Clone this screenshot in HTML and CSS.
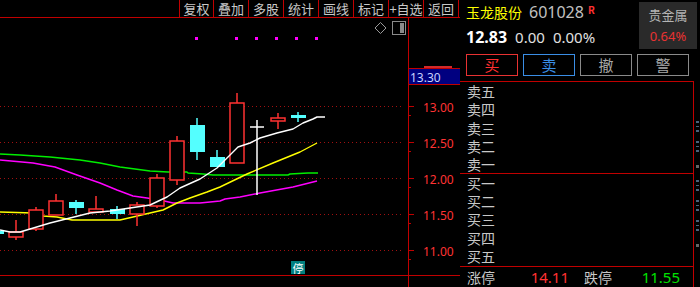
FILE: index.html
```html
<!DOCTYPE html>
<html lang="zh">
<head>
<meta charset="utf-8">
<title>玉龙股份 601028</title>
<link rel="stylesheet" href="styles.css">
</head>
<body>
<div class="app">
  <div class="left">
    <div class="toolbar">
      <span class="tb">复权</span><span class="tb">叠加</span><span class="tb">多股</span><span class="tb">统计</span><span class="tb">画线</span><span class="tb">标记</span><span class="tb">+自选</span><span class="tb">返回</span>
    </div>
    <svg class="chart" viewBox="0 18 460 269" width="460" height="269" xmlns="http://www.w3.org/2000/svg">
      <defs>
        <clipPath id="abovebox"><rect x="408" y="18" width="52" height="50"/></clipPath>
      </defs>
      <g class="grid">
        <line x1="0" y1="106.5" x2="404" y2="106.5"/>
        <line x1="0" y1="142.5" x2="404" y2="142.5"/>
        <line x1="0" y1="178.5" x2="404" y2="178.5"/>
        <line x1="0" y1="214.5" x2="404" y2="214.5"/>
        <line x1="0" y1="250.5" x2="404" y2="250.5"/>
      </g>
      <g class="mk">
        <rect x="195" y="37" width="3" height="3"/>
        <rect x="235" y="37" width="3" height="3"/>
        <rect x="255" y="37" width="3" height="3"/>
        <rect x="275" y="37" width="3" height="3"/>
        <rect x="295" y="37" width="3" height="3"/>
        <rect x="315" y="37" width="3" height="3"/>
      </g>
      <path class="diamond" d="M380.5 22.5 L386 28 L380.5 33.5 L375 28 Z"/>
      <rect class="boxicon" x="392.5" y="21.5" width="13" height="13"/>
      <rect class="boxbar" x="400" y="23" width="4" height="10"/>
      <polyline class="ma ma-g" points="0,154 20,155 50,157 80,160 100,163 120,167 150,171 168,172 187,172 188,173 203,174 213,175 288,175 290,174 308,173 318,173"/>
      <polyline class="ma ma-m" points="0,160 33,163 55,167 77,175 100,183 117,190 133,196 147,198 160,200 173,203 200,203 220,201 225,199 240,197 260,193 293,187 317,181"/>
      <polyline class="ma ma-y" points="0,212 33,213 43,216 57,217 72,220 120,220 133,217 150,213 163,210 177,203 190,198 207,192 220,187 247,174 273,163 300,152 317,143"/>
      <g class="up">
        <line x1="16" y1="220" x2="16" y2="240"/><rect x="9" y="232" width="14" height="5"/>
        <line x1="36" y1="207" x2="36" y2="231"/><rect x="29" y="210" width="14" height="19"/>
        <line x1="56" y1="194" x2="56" y2="201"/><rect x="49" y="201" width="14" height="14"/>
        <line x1="96" y1="196" x2="96" y2="213"/><rect x="89" y="209" width="14" height="3"/>
        <line x1="137" y1="202" x2="137" y2="226"/><rect x="130" y="205" width="14" height="9"/>
        <line x1="157" y1="174" x2="157" y2="208"/><rect x="150" y="178" width="14" height="28"/>
        <line x1="177" y1="136" x2="177" y2="185"/><rect x="170" y="141" width="14" height="39"/>
        <line x1="237" y1="93" x2="237" y2="103"/><rect x="230" y="103" width="14" height="60"/>
        <line x1="278" y1="113" x2="278" y2="129"/><rect x="271" y="118" width="14" height="3"/>
      </g>
      <g class="down">
        <rect x="0" y="231" width="4" height="3"/>
        <line x1="76" y1="200" x2="76" y2="214"/><rect x="69" y="202" width="15" height="6"/>
        <line x1="117" y1="206" x2="117" y2="219"/><rect x="110" y="209" width="15" height="5"/>
        <line x1="197" y1="118" x2="197" y2="160"/><rect x="190" y="125" width="15" height="27"/>
        <line x1="217" y1="150" x2="217" y2="167"/><rect x="210" y="157" width="15" height="10"/>
        <line x1="298" y1="112" x2="298" y2="122"/><rect x="291" y="115" width="15" height="3"/>
      </g>
      <g class="cross">
        <line x1="257" y1="120" x2="257" y2="195"/>
        <line x1="250" y1="127" x2="264" y2="127"/>
      </g>
      <polyline class="ma ma-w" points="0,230 10,232 20,232 30,229 50,223 70,218 90,213 110,211 130,208 150,205 167,197 180,188 200,179 217,168 228,157 238,147 250,143 260,138 277,133 293,129 303,123 313,119 317,117 325,117"/>
      <rect class="badge" x="291" y="261" width="14" height="13"/>
      <text class="badge-t" x="298" y="268">停</text>
      <line class="axis" x1="408.5" y1="18" x2="408.5" y2="287"/>
      <line class="axis" x1="0" y1="275.5" x2="460" y2="275.5"/>
      <g class="ticks">
        <line x1="408" y1="79.5" x2="411" y2="79.5"/>
        <line x1="408" y1="106.5" x2="414" y2="106.5"/>
        <line x1="408" y1="115.5" x2="411" y2="115.5"/>
        <line x1="408" y1="142.5" x2="414" y2="142.5"/>
        <line x1="408" y1="151.5" x2="411" y2="151.5"/>
        <line x1="408" y1="178.5" x2="414" y2="178.5"/>
        <line x1="408" y1="187.5" x2="411" y2="187.5"/>
        <line x1="408" y1="214.5" x2="414" y2="214.5"/>
        <line x1="408" y1="223.5" x2="411" y2="223.5"/>
        <line x1="408" y1="250.5" x2="414" y2="250.5"/>
        <line x1="408" y1="259.5" x2="411" y2="259.5"/>
      </g>
      <g class="lbl">
        <text x="423" y="107">13.00</text>
        <text x="423" y="143">12.50</text>
        <text x="423" y="179">12.00</text>
        <text x="423" y="215">11.50</text>
        <text x="423" y="251">11.00</text>
      </g>
      <rect class="peek" x="424" y="66" width="28" height="2" clip-path="url(#abovebox)"/>
      <rect class="cur" x="408.5" y="68.5" width="52" height="16"/>
      <text class="cur-t" x="410" y="77">13.30</text>
    </svg>
  </div>
  <div class="right">
    <div class="head">
      <div class="quote">
        <div class="name-row"><span class="name">玉龙股份</span><span class="code">601028</span><span class="rflag">R</span></div>
        <div class="price-row"><span class="price">12.83</span><span class="chg">0.00</span><span class="chg">0.00%</span></div>
      </div>
      <div class="sector"><span class="sec-name">贵金属</span><span class="sec-pct">0.64%</span></div>
    </div>
    <div class="btns">
      <span class="btn btn-buy">买</span>
      <span class="btn btn-sell">卖</span>
      <span class="btn btn-gray">撤</span>
      <span class="btn btn-gray">警</span>
    </div>
    <div class="book-wrap">
      <div class="book">
        <div class="sec">
          <div class="row">卖五</div><div class="row">卖四</div><div class="row">卖三</div><div class="row">卖二</div><div class="row">卖一</div>
        </div>
        <div class="sec sec-buy">
          <div class="row">买一</div><div class="row">买二</div><div class="row">买三</div><div class="row">买四</div><div class="row">买五</div>
        </div>
        <div class="limits">
          <span class="lim-l">涨停</span><span class="lim-v up-v">14.11</span><span class="lim-l lim-l2">跌停</span><span class="lim-v dn-v">11.55</span>
        </div>
      </div>
      <div class="clip" aria-hidden="true">
        <span class="cl c1"></span><span class="cl c2"></span><span class="cl c3"></span><span class="cl c4"></span><span class="cl c5"></span><span class="cl c6"></span><span class="cl c7"></span>
      </div>
    </div>
  </div>
</div>
</body>
</html>
```

FILE: styles.css
```css
* { box-sizing: border-box; }
body {
  margin: 0;
  background: #000;
  font-family: "Noto Sans CJK SC", "Noto Sans", sans-serif;
  color: #c8c8c8;
}
.app {
  display: flex;
  width: 700px;
  height: 287px;
  overflow: hidden;
  background: #000;
}
.left {
  width: 460px;
  display: flex;
  flex-direction: column;
}
.toolbar {
  height: 18px;
  border-bottom: 1px solid #c00000;
  display: flex;
  padding-left: 179px;
}
.tb {
  width: 35px;
  border-left: 1px solid #c00000;
  font-size: 13px;
  line-height: 17px;
  text-align: center;
  color: #c8c8c8;
  white-space: nowrap;
}
.tb:first-child { width: 34px; }
.tb:last-child { border-right: 1px solid #c00000; width: 36px; }
.chart { display: block; }
.grid line { stroke: #a01010; stroke-width: 1; stroke-dasharray: 1 3; }
.mk rect { fill: #ff00ff; }
.diamond { fill: none; stroke: #9a9a9a; stroke-width: 1; }
.boxicon { fill: none; stroke: #8a8a8a; stroke-width: 1; }
.boxbar { fill: #8a8a8a; }
.ma { fill: none; stroke-width: 1.4; stroke-linejoin: round; }
.ma-w { stroke: #ffffff; }
.ma-y { stroke: #ffff00; }
.ma-g { stroke: #00ee00; }
.ma-m { stroke: #ff00ff; }
.up line { stroke: #ff3232; stroke-width: 1.5; }
.up rect { fill: #000; stroke: #ff3232; stroke-width: 1.5; }
.down line { stroke: #54ffff; stroke-width: 1.5; }
.down rect { fill: #54ffff; }
.cross line { stroke: #ffffff; stroke-width: 1.5; }
.badge { fill: #008080; }
.badge-t { fill: #ffffff; font-size: 11px; text-anchor: middle; dominant-baseline: central; font-family: "Noto Sans CJK SC", sans-serif; }
.axis { stroke: #c00000; stroke-width: 1; }
.ticks line { stroke: #c00000; stroke-width: 1; }
.lbl text { fill: #ff3333; font-size: 12px; dominant-baseline: central; font-family: "Noto Sans", "Noto Sans CJK SC", sans-serif; }
.peek { fill: #d02a2a; }
.cur { fill: #000080; stroke: #c00000; stroke-width: 1; }
.cur-t { fill: #c8d0ff; font-size: 12px; dominant-baseline: central; font-family: "Noto Sans", sans-serif; }

.right {
  width: 240px;
  display: flex;
  flex-direction: column;
}
.head {
  height: 55px;
  display: flex;
  justify-content: space-between;
  padding: 2px 3px 0 5px;
}
.quote { display: flex; flex-direction: column; }
.name-row {
  display: flex;
  align-items: baseline;
  height: 20px;
  line-height: 20px;
  white-space: nowrap;
}
.name { color: #ffff00; font-size: 14px; margin-left: 1px; }
.code { color: #c0c0c0; font-size: 16px; margin-left: 7px; font-family: "Noto Sans", sans-serif; }
.rflag { color: #ff3030; font-size: 10px; font-weight: bold; margin-left: 4px; position: relative; top: -4px; }
.price-row {
  display: flex;
  align-items: baseline;
  margin-top: 3px;
  height: 24px;
  line-height: 24px;
  white-space: nowrap;
  font-family: "Noto Sans", sans-serif;
}
.price { color: #ffffff; font-size: 16px; font-weight: bold; margin-left: 1px; }
.chg { color: #e0e0e0; font-size: 15px; margin-left: 8px; }
.sector {
  width: 58px;
  height: 47px;
  background: #2a2a2a;
  display: flex;
  flex-direction: column;
  align-items: center;
  justify-content: space-around;
  padding: 2px 0;
}
.sec-name { color: #b4b4b4; font-size: 13px; line-height: 16px; }
.sec-pct { color: #e83232; font-size: 13px; line-height: 16px; font-family: "Noto Sans", sans-serif; }

.btns {
  display: flex;
  gap: 5px;
  padding-left: 6px;
  height: 22px;
}
.btn {
  width: 52px;
  height: 22px;
  border: 1px solid #888;
  font-size: 15px;
  line-height: 20px;
  text-align: center;
  color: #a0a0a0;
}
.btn-buy { border-color: #e83232; color: #ff3030; }
.btn-sell { border-color: #3a8ee6; color: #3a8ee6; }
.btn-gray { border-color: #8a8a8a; color: #a8a8a8; }

.book-wrap {
  margin-top: 5px;
  display: flex;
  flex: 1;
}
.book {
  width: 234px;
  border-top: 1px solid #c00000;
  border-right: 1px solid #c00000;
  display: flex;
  flex-direction: column;
}
.sec { border-bottom: 1px solid #c00000; }
.sec-buy { padding-bottom: 1px; }
.row {
  height: 18.2px;
  line-height: 18.2px;
  font-size: 14px;
  padding-left: 7px;
  color: #c8c8c8;
}
.limits {
  display: flex;
  align-items: center;
  flex: 1;
  font-size: 14px;
  white-space: nowrap;
}
.lim-l { margin-left: 7px; width: 28px; color: #c8c8c8; }
.lim-l2 { margin-left: 15px; }
.lim-v { text-align: right; font-family: "Noto Sans", sans-serif; font-size: 15px; }
.up-v { width: 74px; color: #ff3232; }
.dn-v { width: 68px; color: #00e000; }
.clip {
  width: 6px;
  display: flex;
  flex-direction: column;
  padding-top: 40px;
  gap: 8px;
}
.cl {
  display: block;
  width: 3px;
  height: 12px;
  margin-left: 2px;
  background: linear-gradient(#6a8cb0 0 2px, transparent 2px 5px, #6a8cb0 5px 6px, transparent 6px 9px, #6a8cb0 9px 11px, transparent 11px);
  opacity: 0.7;
}
.c3, .c7 { height: 3px; margin-top: 4px; margin-bottom: 4px; background: #909090; }
```
